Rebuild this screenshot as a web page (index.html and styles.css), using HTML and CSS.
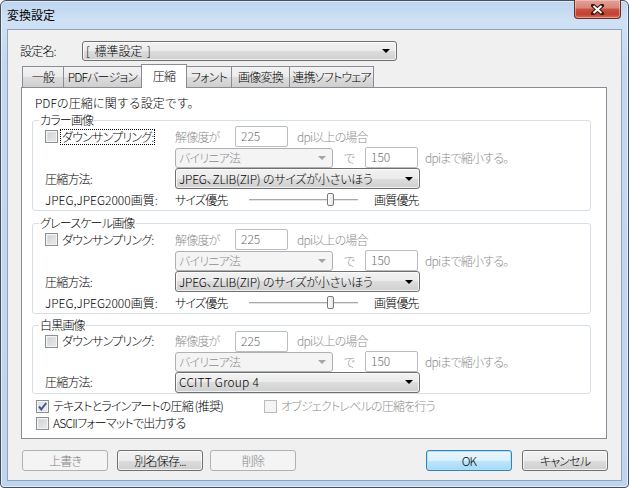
FILE: index.html
```html
<!DOCTYPE html>
<html lang="ja">
<head>
    <meta charset="UTF-8">
    <title>変換設定</title>
    <link rel="stylesheet" href="styles.css">
</head>
<body>
    <div class="window">
        <div class="titlebar">
            <span class="title">変換設定</span>
            <span class="close-btn">
                <svg width="13" height="11" viewBox="0 0 13 11">
                    <path d="M2 1.5 L11 9.5 M11 1.5 L2 9.5" stroke="#3b1410" stroke-width="4" stroke-linecap="square" fill="none"/>
                    <path d="M2.5 2 L10.5 9 M10.5 2 L2.5 9" stroke="#fff" stroke-width="2" fill="none"/>
                </svg>
            </span>
        </div>

        <div class="client">
            <div class="preset">
                <span class="preset-label">設定名:</span>
                <div class="combo preset-combo"><span class="preset-value">[ 標準設定 ]</span><i class="arrow"></i></div>
            </div>

            <div class="tabs">
                <span class="tab tab-general">一般</span>
                <span class="tab tab-version">PDFバージョン</span>
                <span class="tab tab-compress active">圧縮</span>
                <span class="tab tab-font">フォント</span>
                <span class="tab tab-image">画像変換</span>
                <span class="tab tab-link">連携ソフトウェア</span>
            </div>

            <div class="panel">
                <p class="intro">PDFの圧縮に関する設定です。</p>

                <fieldset class="group group-color">
                    <legend>カラー画像</legend>
                    <div class="row">
                        <span class="field-label"><span class="cb"></span><span class="cb-text focus">ダウンサンプリング:</span></span>
                        <span class="dim res-label">解像度が</span>
                        <span class="textbox tb-res">225</span>
                        <span class="dim unit">dpi以上の場合</span>
                    </div>
                    <div class="row">
                        <span class="field-label"></span>
                        <div class="combo disabled method"><span>バイリニア法</span><i class="arrow"></i></div>
                        <span class="dim de">で</span>
                        <span class="textbox tb-to">150</span>
                        <span class="dim unit-to">dpiまで縮小する。</span>
                    </div>
                    <div class="row">
                        <span class="field-label">圧縮方法:</span>
                        <div class="combo wide"><span>JPEG、ZLIB(ZIP) のサイズが小さいほう</span><i class="arrow"></i></div>
                    </div>
                    <div class="row">
                        <span class="field-label latin">JPEG,JPEG2000画質:</span>
                        <span class="slider-start">サイズ優先</span>
                        <span class="slider"><span class="thumb"></span></span>
                        <span class="slider-end">画質優先</span>
                    </div>
                </fieldset>

                <fieldset class="group">
                    <legend>グレースケール画像</legend>
                    <div class="row">
                        <span class="field-label"><span class="cb"></span><span class="cb-text">ダウンサンプリング:</span></span>
                        <span class="dim res-label">解像度が</span>
                        <span class="textbox tb-res">225</span>
                        <span class="dim unit">dpi以上の場合</span>
                    </div>
                    <div class="row">
                        <span class="field-label"></span>
                        <div class="combo disabled method"><span>バイリニア法</span><i class="arrow"></i></div>
                        <span class="dim de">で</span>
                        <span class="textbox tb-to">150</span>
                        <span class="dim unit-to">dpiまで縮小する。</span>
                    </div>
                    <div class="row">
                        <span class="field-label">圧縮方法:</span>
                        <div class="combo wide"><span>JPEG、ZLIB(ZIP) のサイズが小さいほう</span><i class="arrow"></i></div>
                    </div>
                    <div class="row">
                        <span class="field-label latin">JPEG,JPEG2000画質:</span>
                        <span class="slider-start">サイズ優先</span>
                        <span class="slider"><span class="thumb"></span></span>
                        <span class="slider-end">画質優先</span>
                    </div>
                </fieldset>

                <fieldset class="group group-mono">
                    <legend>白黒画像</legend>
                    <div class="row">
                        <span class="field-label"><span class="cb"></span><span class="cb-text">ダウンサンプリング:</span></span>
                        <span class="dim res-label">解像度が</span>
                        <span class="textbox tb-res">225</span>
                        <span class="dim unit">dpi以上の場合</span>
                    </div>
                    <div class="row">
                        <span class="field-label"></span>
                        <div class="combo disabled method"><span>バイリニア法</span><i class="arrow"></i></div>
                        <span class="dim de">で</span>
                        <span class="textbox tb-to">150</span>
                        <span class="dim unit-to">dpiまで縮小する。</span>
                    </div>
                    <div class="row">
                        <span class="field-label">圧縮方法:</span>
                        <div class="combo wide latin-value"><span>CCITT Group 4</span><i class="arrow"></i></div>
                    </div>
                </fieldset>

                <div class="options">
                    <div class="opt-row">
                        <span class="opt opt-text">
                            <span class="cb checked">
                                <svg width="11" height="11" viewBox="0 0 11 11"><path d="M2 5.5 L4.3 8.3 L9.2 2" stroke="#3f5a8a" stroke-width="2" fill="none"/></svg>
                            </span>
                            <span class="cb-text">テキストとラインアートの圧縮 (推奨)</span>
                        </span>
                        <span class="opt disabled"><span class="cb"></span><span class="cb-text">オブジェクトレベルの圧縮を行う</span></span>
                    </div>
                    <div class="opt-row">
                        <span class="opt"><span class="cb"></span><span class="cb-text">ASCIIフォーマットで出力する</span></span>
                    </div>
                </div>
            </div>

            <div class="buttons">
                <span class="btn disabled btn-overwrite">上書き</span>
                <span class="btn btn-saveas">別名保存...</span>
                <span class="btn disabled btn-delete">削除</span>
                <span class="btn default btn-ok">OK</span>
                <span class="btn btn-cancel">キャンセル</span>
            </div>
        </div>
    </div>
</body>
</html>
```

FILE: styles.css
```css
body {
    margin: 0;
    font-family: "Noto Sans CJK JP", "Noto Sans", sans-serif;
    font-size: 12px;
    font-weight: 300;
    line-height: 14px;
    letter-spacing: -0.8px;
    color: #000;
    font-feature-settings: "palt";
}

.window {
    width: 629px;
    height: 488px;
    box-sizing: border-box;
    border: 1px solid #44505e;
    border-radius: 6px 6px 4px 4px;
    padding: 0 6px 6px 6px;
    background: linear-gradient(to bottom, #bdd5ef 0, #cfe1f4 20px, #c4d9f0 60px, #bfd5ee 100%);
    box-shadow: inset 0 0 0 1px rgba(255, 255, 255, 0.55);
    display: flex;
    flex-direction: column;
}

.titlebar {
    height: 28px;
    display: flex;
    justify-content: space-between;
    align-items: flex-start;
}

.title {
    margin-top: 7px;
    line-height: 14px;
    letter-spacing: 0;
    font-feature-settings: normal;
    font-weight: 400;
}

.close-btn {
    width: 47px;
    height: 19px;
    box-sizing: border-box;
    margin-top: -1px;
    margin-right: 1px;
    border: 1px solid #6a2d25;
    border-top: none;
    border-radius: 0 0 4px 4px;
    background: linear-gradient(to bottom, #e3a298 0, #d98479 45%, #c65444 50%, #c3412f 80%, #d6705c 100%);
    box-shadow: inset 0 0 0 1px rgba(255, 220, 210, 0.45);
    display: flex;
    justify-content: center;
    align-items: center;
}

.client {
    height: 452px;
    box-sizing: border-box;
    border: 1px solid #8fa3bb;
    background: #f0f0f0;
    display: flex;
    flex-direction: column;
}

/* preset row */
.preset {
    display: flex;
    align-items: center;
    margin: 11px 0 0 12px;
}

.preset-label {
    width: 62px;
}

.combo {
    height: 20px;
    box-sizing: border-box;
    border: 1px solid #707070;
    border-radius: 3px;
    background: linear-gradient(to bottom, #f2f2f2 0, #ebebeb 50%, #dddddd 50%, #cfcfcf 100%);
    box-shadow: inset 0 0 0 1px rgba(255, 255, 255, 0.7);
    display: flex;
    align-items: center;
    justify-content: space-between;
    padding: 0 6px 0 3px;
}

.preset-combo {
    width: 315px;
}

.preset-value {
    letter-spacing: 0;
    word-spacing: 2px;
}

.arrow {
    width: 0;
    height: 0;
    border-left: 4px solid transparent;
    border-right: 4px solid transparent;
    border-top: 4px solid #000;
}

.combo.disabled {
    border-color: #adb2b5;
    background: #f4f4f4;
    box-shadow: none;
    color: #8d8d8d;
}

.combo.disabled .arrow {
    border-top-color: #a4a4a4;
}

/* tabs */
.tabs {
    display: flex;
    align-items: flex-end;
    height: 23px;
    margin: 3px 0 0 14px;
}

.tab {
    height: 21px;
    box-sizing: border-box;
    border: 1px solid #898c95;
    border-bottom: none;
    margin-right: -1px;
    line-height: 19px;
    text-align: center;
    white-space: nowrap;
    background: linear-gradient(to bottom, #f2f2f2 0, #ebebeb 50%, #dddddd 50%, #cfcfcf 100%);
}

.tab-general { width: 42px; }
.tab-version { width: 79px; }
.tab-compress { width: 46px; }
.tab-font { width: 46px; }
.tab-image { width: 59px; }
.tab-link { width: 85px; }

.tab.active {
    height: 24px;
    margin-bottom: -1px;
    line-height: 22px;
    background: #fff;
    position: relative;
    z-index: 1;
}

/* panel */
.panel {
    height: 352px;
    box-sizing: border-box;
    margin: 0 14px 0 13px;
    border: 1px solid #898c95;
    background: #fff;
    padding: 8px 15px 0 10px;
}

.intro {
    margin: 0 0 0 3px;
    letter-spacing: 0;
    font-feature-settings: normal;
}

.group {
    margin: 6px 0 0 0;
    padding: 0 0 0 12px;
    border: 1px solid #d5dfe5;
    border-radius: 3px;
}

.group-color {
    margin-top: 4px;
}

.group-mono {
    margin-top: 5px;
}

.group legend {
    margin-left: -6px;
    padding: 0 1px;
    line-height: 12px;
}

.group-mono .row {
    height: 20.5px;
}

.row {
    height: 21px;
    display: flex;
    align-items: center;
    white-space: nowrap;
}

.field-label {
    width: 130px;
    flex: none;
    display: flex;
    align-items: center;
}

.latin {
    letter-spacing: 0;
}

.cb {
    width: 13px;
    height: 13px;
    box-sizing: border-box;
    flex: none;
    border: 1px solid #8e8f8f;
    background: linear-gradient(135deg, #c9ccd1 0, #eeeeee 100%);
    box-shadow: inset 0 0 0 1px #f4f4f4, inset 0 0 0 2px #dfe1e4;
    display: flex;
    align-items: center;
    justify-content: center;
}

.cb.checked {
    background: linear-gradient(135deg, #d6dde8 0, #f6f7f9 100%);
}

.cb-text {
    margin-left: 3px;
    padding: 0 1px;
}

.focus {
    outline: 1px dotted #000;
}

.dim {
    color: #8d8d8d;
}

.res-label {
    width: 60px;
}

.textbox {
    height: 21px;
    box-sizing: border-box;
    border: 1px solid #b9bdc2;
    border-radius: 2px;
    background: #fff;
    color: #6d6d6d;
    padding: 1px 0 0 5px;
    line-height: 16px;
    letter-spacing: 0;
}

.tb-res {
    width: 53px;
}

.unit {
    margin-left: 9px;
}

.method {
    width: 158px;
}

.de {
    margin-left: 11px;
    width: 21px;
}

.tb-to {
    width: 53px;
}

.unit-to {
    margin-left: 7px;
}

.wide {
    width: 245px;
    height: 21px;
    letter-spacing: -0.2px;
}

.wide.latin-value {
    letter-spacing: 0.2px;
}

.slider-start {
    width: 74px;
}

.slider {
    width: 109px;
    height: 14px;
    display: flex;
    align-items: center;
    background: linear-gradient(to bottom, transparent 6px, #a9a9a9 6px, #a9a9a9 7px, #e4e4e4 7px, #e4e4e4 8px, transparent 8px);
}

.thumb {
    width: 7px;
    height: 13px;
    box-sizing: border-box;
    margin-left: 78px;
    border: 1px solid #7a7a7a;
    border-radius: 2px;
    background: linear-gradient(to right, #ffffff 0, #e6e6e6 100%);
}

.slider-end {
    margin-left: 16px;
}

/* bottom options */
.options {
    margin-top: 4px;
    padding-left: 4px;
}

.opt-row {
    height: 17px;
    display: flex;
    align-items: center;
}

.opt {
    display: flex;
    align-items: center;
}

.opt-text {
    width: 228px;
}

.opt.disabled {
    color: #8d8d8d;
}

.opt.disabled .cb {
    border-color: #bcbcbc;
    background: #f4f4f4;
    box-shadow: none;
}

/* dialog buttons */
.buttons {
    display: flex;
    margin: 11px 13px 0 14px;
}

.btn {
    width: 86px;
    height: 21px;
    box-sizing: border-box;
    border: 1px solid #707070;
    border-radius: 3px;
    background: linear-gradient(to bottom, #f2f2f2 0, #ebebeb 50%, #dddddd 50%, #cfcfcf 100%);
    box-shadow: inset 0 0 0 1px rgba(255, 255, 255, 0.7);
    text-align: center;
    line-height: 19px;
}

.btn.disabled {
    border-color: #adb2b5;
    background: #f4f4f4;
    box-shadow: none;
    color: #838383;
}

.btn.default {
    border-color: #3c7fb1;
    background: linear-gradient(to bottom, #eaf6fd 0, #d9f0fc 50%, #bee6fd 50%, #a7d9f5 100%);
    box-shadow: inset 0 0 0 1px #a4e4ff;
}

.btn-saveas {
    margin-left: 9px;
}

.btn-delete {
    margin-left: 7px;
}

.btn-ok {
    margin-left: auto;
}

.btn-cancel {
    margin-left: 10px;
}
```
